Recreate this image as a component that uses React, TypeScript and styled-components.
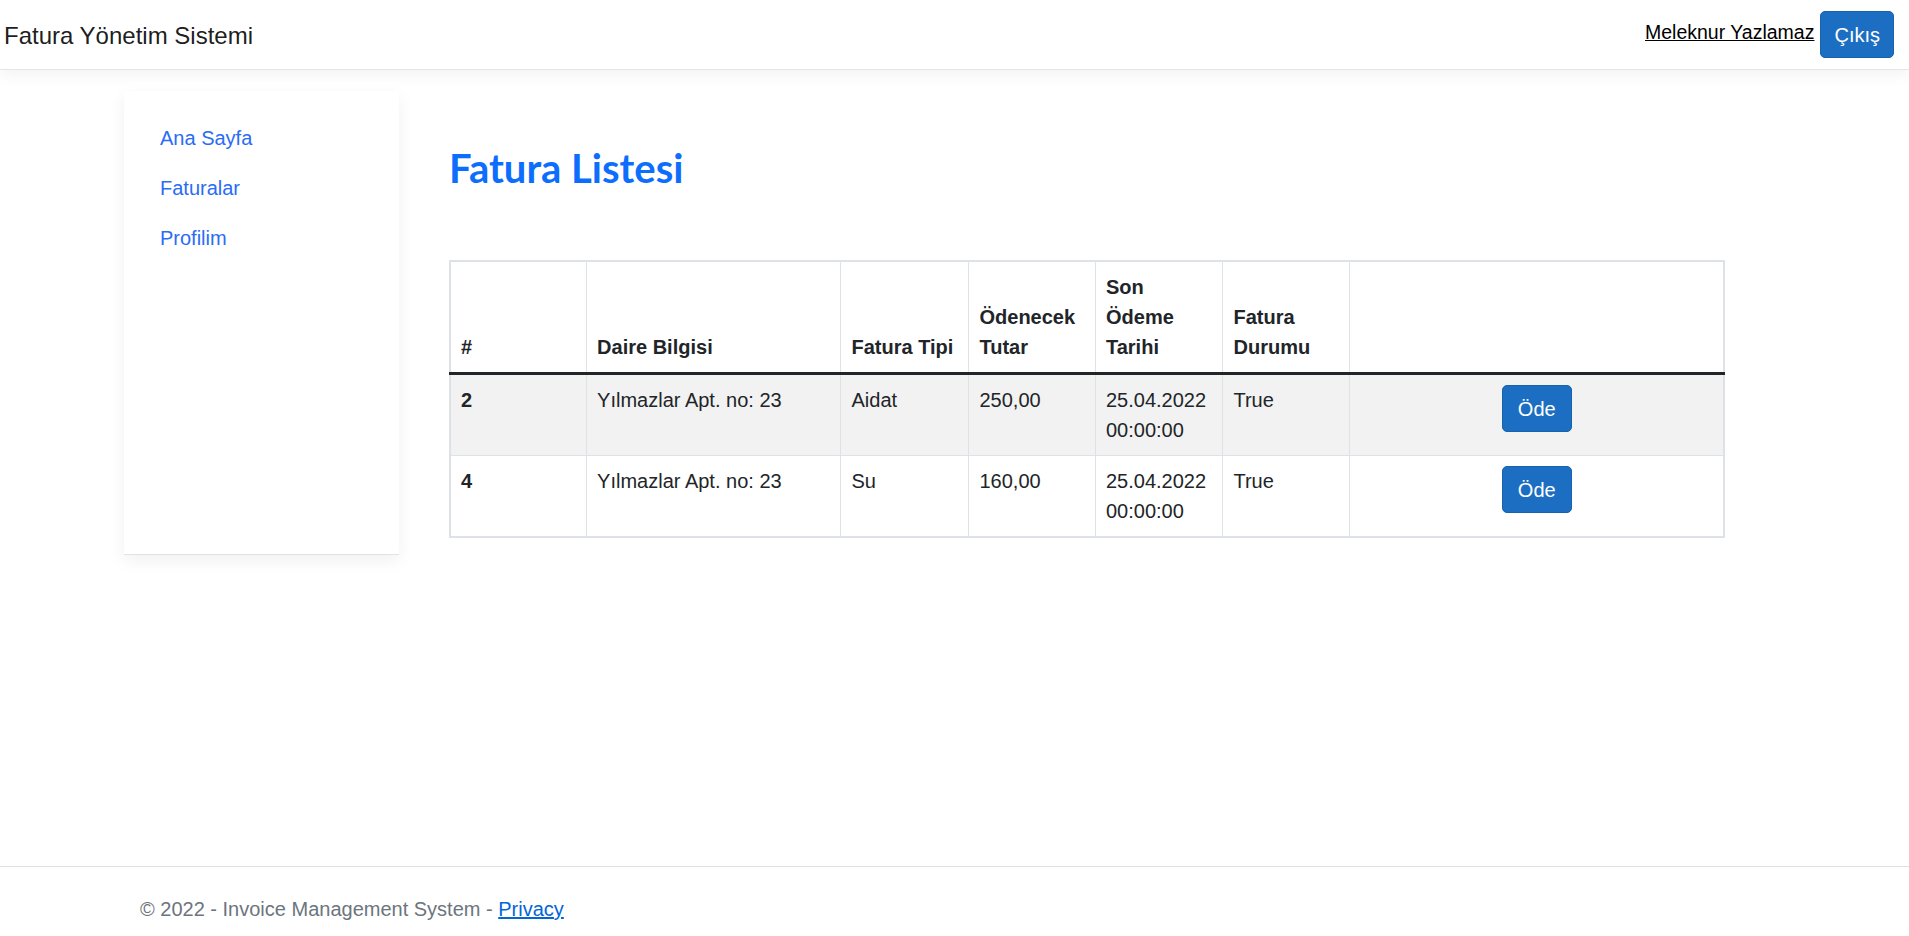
import React from "react";
import styled, { createGlobalStyle } from "styled-components";

const GlobalStyle = createGlobalStyle`
  html, body { margin: 0; padding: 0; background: #fff; }
  body {
    font-family: "Liberation Sans", Arial, sans-serif;
    font-size: 20px;
    line-height: 1.5;
    color: #212529;
  }
  * { box-sizing: border-box; }
`;

const Page = styled.div`
  min-height: 100vh;
  display: flex;
  flex-direction: column;
`;

const Navbar = styled.header`
  height: 70px;
  display: flex;
  align-items: center;
  justify-content: space-between;
  padding: 0 15px 0 4px;
  background: #fff;
  border-bottom: 1px solid #e5e5e5;
  box-shadow: 0 5px 15px rgba(0, 0, 0, 0.05);
`;

const Brand = styled.div`
  font-size: 24px;
  line-height: 1.5;
  color: rgba(0, 0, 0, 0.9);
  padding-top: 2px;
`;

const UserArea = styled.div`
  display: flex;
  align-items: center;
  gap: 6px;
`;

const UserLink = styled.a`
  color: #000;
  text-decoration: underline;
  font-size: 19.5px;
  line-height: 1.5;
  margin-top: -4px;
  cursor: pointer;
`;

const PrimaryButton = styled.button<{ $pad?: number }>`
  font-family: inherit;
  font-size: 20px;
  line-height: 1.5;
  color: #fff;
  background: #1b6ec2;
  border: 1px solid #1861ac;
  border-radius: 5px;
  padding: 7.5px ${(p) => p.$pad ?? 15}px;
  cursor: pointer;
`;

const Body = styled.div`
  flex: 1;
  display: flex;
  align-items: flex-start;
  padding: 21px 0 0 124px;
`;

const Sidebar = styled.nav`
  width: 275px;
  height: 464px;
  background: #fff;
  padding: 22px 16px;
  border-bottom: 1px solid #e2e2e2;
  box-shadow: 0 6px 16px rgba(0, 0, 0, 0.06);
  display: flex;
  flex-direction: column;
`;

const SideLink = styled.a`
  display: block;
  padding: 10px 20px;
  color: #2a6cf6;
  font-size: 20px;
  line-height: 30px;
  text-decoration: none;
  cursor: pointer;
`;

const Main = styled.main`
  margin-left: 50px;
  width: 1275px;
`;

const Title = styled.h2`
  margin: 53px 0 68px 0;
  font-family: Lato, "Liberation Sans", sans-serif;
  font-size: 40px;
  line-height: 48px;
  font-weight: 700;
  color: #0d6efd;
`;

const Table = styled.table`
  width: 1274px;
  table-layout: fixed;
  border-collapse: collapse;
  border: 2px solid #dee2e6;
  color: #212529;
`;

const Th = styled.th`
  text-align: left;
  vertical-align: bottom;
  font-weight: 700;
  padding: 10px;
  line-height: 30px;
  border: 1px solid #dee2e6;
  border-bottom: 3px solid #212529;
`;

const Tr = styled.tr<{ $striped?: boolean }>`
  background: ${(p) => (p.$striped ? "#f2f2f2" : "#fff")};
`;

const Td = styled.td<{ $bold?: boolean; $center?: boolean }>`
  vertical-align: top;
  padding: 10px;
  line-height: 30px;
  border: 1px solid #dee2e6;
  font-weight: ${(p) => (p.$bold ? 700 : 400)};
  text-align: ${(p) => (p.$center ? "center" : "left")};
`;

const Footer = styled.footer`
  height: 70px;
  border-top: 1px solid #dee2e6;
  line-height: 84px;
  overflow: hidden;
  padding-left: 140px;
  color: #6c757d;
  font-size: 20px;
  white-space: nowrap;
`;

const FooterLink = styled.a`
  color: #0366d6;
  text-decoration: underline;
  cursor: pointer;
`;

const colWidths = [136.6, 254.4, 128, 126.5, 127.5, 127, 374];

const rows = [
  { id: "2", daire: "Yılmazlar Apt. no: 23", tip: "Aidat", tutar: "250,00", tarih: "25.04.2022 00:00:00", durum: "True" },
  { id: "4", daire: "Yılmazlar Apt. no: 23", tip: "Su", tutar: "160,00", tarih: "25.04.2022 00:00:00", durum: "True" },
];

export default function App() {
  return (
    <Page>
      <GlobalStyle />
      <Navbar>
        <Brand>Fatura Yönetim Sistemi</Brand>
        <UserArea>
          <UserLink>Meleknur Yazlamaz</UserLink>
          <PrimaryButton $pad={13}>Çıkış</PrimaryButton>
        </UserArea>
      </Navbar>
      <Body>
        <Sidebar>
          <SideLink>Ana Sayfa</SideLink>
          <SideLink>Faturalar</SideLink>
          <SideLink>Profilim</SideLink>
        </Sidebar>
        <Main>
          <Title>Fatura Listesi</Title>
          <Table>
            <colgroup>
              {colWidths.map((w, i) => (
                <col key={i} style={{ width: w }} />
              ))}
            </colgroup>
            <thead>
              <tr>
                <Th>#</Th>
                <Th>Daire Bilgisi</Th>
                <Th>Fatura Tipi</Th>
                <Th>Ödenecek Tutar</Th>
                <Th>Son Ödeme Tarihi</Th>
                <Th>Fatura Durumu</Th>
                <Th></Th>
              </tr>
            </thead>
            <tbody>
              {rows.map((r, i) => (
                <Tr key={r.id} $striped={i % 2 === 0}>
                  <Td $bold>{r.id}</Td>
                  <Td>{r.daire}</Td>
                  <Td>{r.tip}</Td>
                  <Td>{r.tutar}</Td>
                  <Td>{r.tarih}</Td>
                  <Td>{r.durum}</Td>
                  <Td $center>
                    <PrimaryButton>Öde</PrimaryButton>
                  </Td>
                </Tr>
              ))}
            </tbody>
          </Table>
        </Main>
      </Body>
      <Footer>
        © 2022 - Invoice Management System - <FooterLink>Privacy</FooterLink>
      </Footer>
    </Page>
  );
}
